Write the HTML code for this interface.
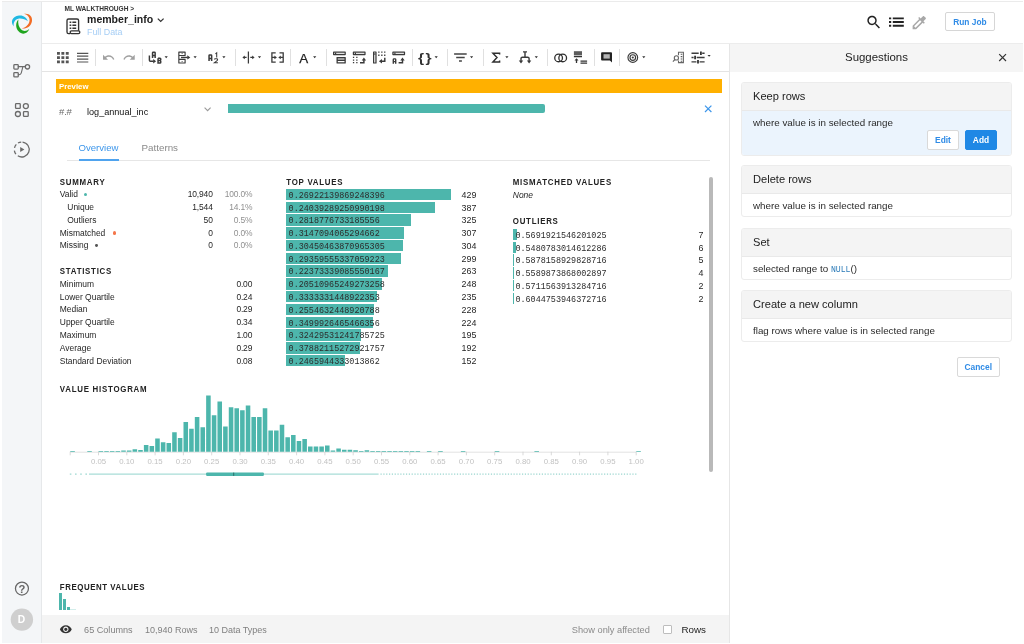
<!DOCTYPE html>
<html>
<head>
<meta charset="utf-8">
<title>member_info</title>
<style>
*{box-sizing:border-box;margin:0;padding:0}
html,body{width:1024px;height:644px;overflow:hidden;background:#fff}
body{font-family:"Liberation Sans",sans-serif;color:#222;position:relative;font-size:9px}
#root{position:absolute;left:0;top:0;width:1024px;height:644px;will-change:transform;background:transparent}
.abs{position:absolute;white-space:nowrap}
.t{position:absolute;white-space:nowrap;line-height:12px;height:12px}
.r{text-align:right}
#side{left:0;top:2px;width:42px;height:642px;background:#f4f6f8;border-right:1px solid #e6e8ea}
#hdr{left:0;top:0;width:1024px;height:44px;border-top:2.1px solid #ebebeb;border-bottom:1px solid #ececec;background:#fff}
#tb{left:42px;top:44px;width:688px;height:28px;border-bottom:1px solid #e4e4e4;background:#fff}
.sep{position:absolute;top:49px;width:1px;height:17px;background:#e0e0e0}
.dd{position:absolute;top:56.3px;width:0;height:0;border-left:1.7px solid transparent;border-right:1.7px solid transparent;border-top:2px solid #333}
#panel{left:729px;top:44px;width:295px;height:600px;border-left:1px solid #e6e6e6;background:#fff}
#phead{left:730px;top:44px;width:294px;height:28px;background:#f5f5f5}
.card{position:absolute;left:741px;width:271px;border:1px solid #ececec;border-radius:3px;background:#fff;overflow:hidden}
.card .h{height:28px;background:#f4f4f4;border-bottom:1px solid #e9e9e9;font-size:11.1px;line-height:27.5px;padding-left:11px;color:#222}
.card .b{font-size:9.8px;line-height:12px;padding:5.6px 0 0 11px;color:#2a2a2a;height:23px}
.btn{position:absolute;height:20px;border-radius:2px;font-size:8.4px;font-weight:bold;text-align:center;line-height:18.5px;border:1px solid #d9d9d9;background:#fff;color:#2f8be6}
.sum{font-size:8.45px;color:#262626}
.gray{color:#909090}
.num{letter-spacing:-0.15px}
.cnt{font-size:8.9px}
.sec{font-size:7.9px;font-weight:bold;letter-spacing:0.74px;color:#222;transform:scaleY(1.1);transform-origin:0 50%}
.mono{font-family:"Liberation Mono",monospace;font-size:8.45px;color:#2c2c2c;transform:scaleY(1.12);transform-origin:0 50%}
.dot{position:absolute;width:3.4px;height:3.4px;border-radius:50%}
.bar{position:absolute;background:#4db6ac}
.ic{position:absolute;overflow:visible}
</style>
</head>
<body>
<div id="root">
<div id="hdr" class="abs"></div>
<div id="side" class="abs"></div>
<div class="t " style="left:64.5px;top:3.20px;font-size:6.6px;font-weight:bold;color:#333">ML WALKTHROUGH &gt;</div>
<div class="t " style="left:87px;top:13.40px;font-size:10.55px;font-weight:bold;color:#222">member_info</div>
<div class="t " style="left:87px;top:25.90px;font-size:8.9px;color:#a6cef5">Full Data</div>
<div id="tb" class="abs"></div>
<div class="abs" style="left:42px;top:615px;width:687px;height:29px;background:#f4f4f4"></div>
<div id="panel" class="abs"></div>
<div id="phead" class="abs"></div>
<svg class="ic" style="left:0px;top:0px" width="42" height="644" viewBox="0 0 42 644">
<path d="M13.8 26.5C10.1 22.4 12 16.4 19 15.6C23.4 15.1 26.8 17.7 27.8 21.2C25 18.8 21 18.1 18.2 18.7C14.6 19.6 13.1 22.9 13.8 26.5Z" fill="#1fb8e2"/>
<path d="M24 13.8C29 12.8 32.9 16.4 31.9 21.4C31 26.2 26.5 29.2 21.6 28.4C25.8 27.5 28.7 24.7 29.5 20.9C30.1 17.6 27.7 14.9 24 13.8Z" fill="#f26c24"/>
<path d="M18.4 19.4C15.4 22.4 15.4 28.2 18.8 31.6C22 34.9 27.2 34.4 29.4 28.8C26.6 31.6 23.3 31.7 21 29.3C18.7 26.8 17.7 23.2 18.4 19.4Z" fill="#1fa51f"/>
<g fill="none" stroke="#6b6b6b" stroke-width="1.3" stroke-linejoin="round" stroke-linecap="round">
<rect x="13.85" y="64.65" width="4.4" height="4.4" rx="0.8"/>
<rect x="13.85" y="72.55" width="4.4" height="4.4" rx="0.8"/>
<circle cx="27.45" cy="66.85" r="2.15"/>
<path d="M18.3 66.6H25.2M22.9 66.7L21.3 72.9Q20.9 74.6 19.2 74.7H18.4" stroke-width="1.1"/>
<rect x="15.55" y="103.7" width="4.7" height="4.7" rx="0.7"/>
<circle cx="25.85" cy="106.05" r="2.5"/>
<circle cx="17.9" cy="114" r="2.5"/>
<rect x="23.5" y="111.65" width="4.7" height="4.7" rx="0.7"/>
<path d="M22.53 142.09A7.45 7.45 0 1 1 17.80 155.82M15.88 154.09A7.45 7.45 0 0 1 14.37 150.54M14.49 147.82A7.45 7.45 0 0 1 16.30 144.42M18.02 143.05A7.45 7.45 0 0 1 21.23 142.07" stroke-width="1.3" stroke-linecap="butt"/>
</g>
<path d="M20.2 147.1L24.4 149.5L20.2 151.9Z" fill="#6b6b6b"/>
<circle cx="21.95" cy="588.55" r="6.5" fill="none" stroke="#666" stroke-width="1.25"/>
<text x="21.95" y="592.6" font-family="Liberation Sans, sans-serif" font-size="11.2" font-weight="bold" fill="#666" text-anchor="middle">?</text>
<circle cx="21.9" cy="619.6" r="11.2" fill="#cfcfcf"/>
<text x="21.5" y="623.3" font-family="Liberation Sans, sans-serif" font-size="10.3" font-weight="bold" fill="#fff" text-anchor="middle">D</text>
</svg>
<svg class="ic" style="left:42px;top:0px" width="982" height="44" viewBox="42 0 982 44">
<g fill="none" stroke="#333" stroke-width="1.35" stroke-linejoin="round">
<path d="M70.2 33.6H68.6Q67 33.6 67 32V20.6Q67 19 68.6 19H77Q78.6 19 78.6 20.6V30.8"/>
<rect x="70.2" y="30.8" width="9.6" height="2.8" rx="1.3"/>
</g>
<path d="M69.6 21.6h1.7v1.5h-1.7zM72.4 21.6h3.8v1.5h-3.8zM69.6 24.5h1.7v1.5h-1.7zM72.4 24.5h3.8v1.5h-3.8zM69.6 27.4h1.7v1.5h-1.7zM72.4 27.4h3.8v1.5h-3.8z" fill="#333"/>
<path d="M157.8 18.6L160.7 21.4L163.6 18.6" fill="none" stroke="#333" stroke-width="1.3"/>
<path transform="translate(865.2,13.7) scale(0.72)" d="M15.5 14h-.79l-.28-.27C15.41 12.59 16 11.11 16 9.5 16 5.91 13.09 3 9.5 3S3 5.91 3 9.5 5.91 16 9.5 16c1.61 0 3.09-.59 4.23-1.57l.27.28v.79l5 4.99L20.49 19l-4.99-5zm-6 0C7.01 14 5 11.99 5 9.5S7.01 5 9.5 5 14 7.01 14 9.5 11.99 14 9.5 14z" fill="#222"/>
<path d="M889 17.45h2.2v1.8h-2.2zM892.8 17.45h11v1.8h-11zM889 21.1h2.2v1.8h-2.2zM892.8 21.1h11v1.8h-11zM889 24.85h2.2v1.8h-2.2zM892.8 24.85h11v1.8h-11z" fill="#222"/>
<path transform="translate(910.4,13.7) scale(0.74)" d="M20.71 5.63l-2.34-2.34c-.39-.39-1.02-.39-1.41 0l-3.12 3.12-1.93-1.91-1.41 1.41 1.42 1.42L3 16.25V21h4.75l8.92-8.92 1.42 1.42 1.41-1.41-1.92-1.92 3.12-3.12c.4-.4.4-1.03.01-1.42zM6.92 19L5 17.08l8.06-8.06 1.92 1.92L6.92 19z" fill="#a8a8a8"/>
</svg>
<div class="btn" style="left:945.1px;top:12.3px;width:49.6px;height:19.2px;line-height:19.4px;font-size:8.35px;border-color:#d6d6d6">Run Job</div>
<svg class="ic" style="left:42px;top:44px" width="688" height="28" viewBox="42 44 688 28">
<path d="M57 52h2.9v2.8h-2.9zM57 56.2h2.9v2.8h-2.9zM57 60.4h2.9v2.8h-2.9zM61.4 52h2.9v2.8h-2.9zM61.4 56.2h2.9v2.8h-2.9zM61.4 60.4h2.9v2.8h-2.9zM65.8 52h2.9v2.8h-2.9zM65.8 56.2h2.9v2.8h-2.9zM65.8 60.4h2.9v2.8h-2.9z" fill="#555"/>
<path d="M77 53.3H88.3M77 56.2H88.3M77 59.1H88.3M77 62H88.3" stroke="#555" stroke-width="1.2" fill="none"/>
<path transform="translate(101.9,50.9) scale(0.556)" d="M12.5 8c-2.65 0-5.05.99-6.9 2.6L2 7v9h9l-3.62-3.62c1.39-1.16 3.16-1.88 5.12-1.88 3.54 0 6.55 2.31 7.6 5.5l2.37-.78C21.08 11.03 17.15 8 12.5 8z" fill="#a0a0a0"/>
<path transform="translate(122.5,50.9) scale(0.556)" d="M18.4 10.6C16.55 8.99 14.15 8 11.5 8c-4.65 0-8.58 3.03-9.96 7.22L3.9 16c1.05-3.19 4.05-5.5 7.6-5.5 1.95 0 3.73.72 5.12 1.88L13 16h9V7l-3.6 3.6z" fill="#a0a0a0"/>
<g fill="none" stroke="#3a3a3a" stroke-width="1.45">
<path d="M149.4 55.4V60.2Q149.4 61.2 150.4 61.2H153.6"/>
</g>
<path d="M153.2 59L156.1 61.2L153.2 63.4Z" fill="#3a3a3a"/>
<path d="M152.55 57.9V52.800000000000004Q152.55 52.35 153.20000000000002 52.35H154.5Q155.15 52.35 155.15 52.800000000000004V57.9M152.55 55.506H155.15" fill="none" stroke="#3a3a3a" stroke-width="1.5"/>
<path d="M158.05 58.15H160.0Q160.75 58.15 160.75 58.9V59.55Q160.75 60.55 159.9 60.55H158.05M159.9 60.55Q160.75 60.55 160.75 61.55V62.199999999999996Q160.75 62.949999999999996 160.0 62.949999999999996H158.05V58.15" fill="none" stroke="#3a3a3a" stroke-width="1.5"/>
<path d="M178.85 52.05H185.1V55.5H178.85ZM178.85 59.4H185.1V62.95H178.85ZM178.85 55.5V59.4" fill="none" stroke="#3a3a3a" stroke-width="1.15" stroke-linejoin="round"/>
<path d="M181 57.45H187.8" fill="none" stroke="#3a3a3a" stroke-width="1.4"/>
<path d="M187.3 55.2L190.3 57.4L187.3 59.6Z" fill="#3a3a3a"/>
<path d="M181.4 53.5h1.6v0.6h-1.6zM181.4 60.9h1.6v0.6h-1.6z" fill="#3a3a3a"/>
<path d="M209.05 61.0V55.5Q209.05 55.05 209.70000000000002 55.05H211.0Q211.65 55.05 211.65 55.5V61.0M209.05 58.45399999999999H211.65" fill="none" stroke="#3a3a3a" stroke-width="1.5"/>
<path d="M215.4 53.9L216.7 52.9V57.4" fill="none" stroke="#3a3a3a" stroke-width="1.05"/>
<path d="M214.4 59.6Q214.4 58.7 215.4 58.7H216.6Q217.6 58.7 217.6 59.6Q217.6 60.4 216.8 60.9L214.4 62.7H217.9" fill="none" stroke="#3a3a3a" stroke-width="1.05"/>
<path d="M248.4 51.4V63.6M243.6 57.4H246.6M250.3 57.4H253.4" fill="none" stroke="#3a3a3a" stroke-width="1.25"/>
<path d="M244.8 55.5L242.4 57.4L244.8 59.3ZM252.2 55.5L254.6 57.4L252.2 59.3Z" fill="#3a3a3a"/>
<path d="M275.7 52.8H271.9V62.1H275.7M279.5 52.8H283.2V62.1H279.5M272 57.4H275M283.2 57.4H280.4" fill="none" stroke="#3a3a3a" stroke-width="1.3"/>
<path d="M274.4 55.5L276.9 57.4L274.4 59.3ZM280.8 55.5L278.3 57.4L280.8 59.3Z" fill="#3a3a3a"/>
<text x="299.3" y="62.5" font-family="Liberation Sans, sans-serif" font-size="13.4" fill="#222" stroke="#222" stroke-width="0.25">A</text>
<rect x="333" y="51.4" width="12.8" height="3.8" rx="0.7" fill="#3a3a3a"/><rect x="334.2" y="52.75" width="10.4" height="1.1" fill="#fff"/><rect x="335.0" y="52.6" width="1.2" height="1.4" fill="#3a3a3a"/>
<rect x="336.5" y="57" width="9.3" height="6.6" rx="0.6" fill="#3a3a3a"/><path d="M337.8 58.4h6.7v1.1h-6.7zM337.8 61.1h6.7v1.1h-6.7z" fill="#fff"/>
<rect x="352.8" y="51.4" width="12.8" height="3.8" rx="0.7" fill="#3a3a3a"/><rect x="354.0" y="52.75" width="10.4" height="1.1" fill="#fff"/><rect x="354.8" y="52.6" width="1.2" height="1.4" fill="#3a3a3a"/>
<path d="M352.9 56.8h1.3v1.3h-1.3zM352.9 59.4h1.3v1.3h-1.3zM352.9 62.0h1.3v1.3h-1.3zM356.2 56.8h1.3v1.3h-1.3zM356.2 59.4h1.3v1.3h-1.3zM356.2 62.0h1.3v1.3h-1.3z" fill="#3a3a3a"/>
<path d="M360 62.7H363.9V59.6" fill="none" stroke="#3a3a3a" stroke-width="1.45"/><path d="M361.7 60.4L363.9 57.4L366.1 60.4Z" fill="#3a3a3a"/>
<rect x="373" y="51.4" width="3.6" height="12.2" rx="0.6" fill="#3a3a3a"/><rect x="374.25" y="52.5" width="1.1" height="10" fill="#fff"/>
<rect x="374.1" y="53.4" width="1.4" height="1.3" fill="#3a3a3a"/>
<path d="M378.2 51.5h1.3v1.3h-1.3zM378.2 54.6h1.3v1.3h-1.3zM381.2 51.5h1.3v1.3h-1.3zM381.2 54.6h1.3v1.3h-1.3zM384.1 51.5h1.3v1.3h-1.3zM384.1 54.6h1.3v1.3h-1.3z" fill="#3a3a3a"/>
<path d="M384.8 57.8V61.3H381.4" fill="none" stroke="#3a3a3a" stroke-width="1.45"/>
<path d="M382 59.1L378.9 61.3L382 63.5Z" fill="#3a3a3a"/>
<rect x="392.3" y="51.4" width="12.8" height="3.8" rx="0.7" fill="#3a3a3a"/><rect x="393.5" y="52.75" width="10.4" height="1.1" fill="#fff"/><rect x="394.3" y="52.6" width="1.2" height="1.4" fill="#3a3a3a"/>
<path d="M393.3 63.7V59.400000000000006Q393.3 58.900000000000006 394.0 58.900000000000006H395.00000000000006Q395.70000000000005 58.900000000000006 395.70000000000005 59.400000000000006V63.7M393.3 61.61H395.70000000000005" fill="none" stroke="#3a3a3a" stroke-width="1.4"/>
<path d="M398.6 62.7H402.5V59.6" fill="none" stroke="#3a3a3a" stroke-width="1.45"/><path d="M400.3 60.4L402.5 57.4L404.70000000000005 60.4Z" fill="#3a3a3a"/>
<g font-family="Liberation Sans, sans-serif" font-size="13.2" font-weight="bold" fill="#333"><text transform="translate(418.1,61.5) scale(1.18,1)">{</text><text transform="translate(425.4,61.5) scale(1.18,1)">}</text></g>
<path d="M454.1 53.9H466.7M456.2 57.5H464.7M459 61.1H461.9" stroke="#444" stroke-width="1.5" fill="none"/>
<path d="M499.6 54.6V53.2H492.9L497 57.5L492.9 61.9H499.6V60.4" fill="none" stroke="#2e2e2e" stroke-width="1.45" stroke-linejoin="miter"/>
<path d="M523 51.9H527M525 51.9V57.2M521 61.6V58.6Q521 57.2 522.4 57.2H527.7Q529.1 57.2 529.1 58.6V61.6" fill="none" stroke="#3a3a3a" stroke-width="1.4"/>
<path d="M518.8 60.6L521 63.6L523.2 60.6ZM526.9 60.6L529.1 63.6L531.3 60.6Z" fill="#3a3a3a"/>
<circle cx="558.6" cy="57.9" r="3.85" fill="none" stroke="#2e2e2e" stroke-width="1.3"/><circle cx="562.7" cy="57.9" r="3.85" fill="none" stroke="#2e2e2e" stroke-width="1.3"/>
<rect x="573.9" y="51.2" width="8.1" height="3.9" fill="#5c5c5c"/>
<path d="M573.9 56.5H582M580.5 61.1H587.1M580.5 63.1H587.1" stroke="#333" stroke-width="1.35" fill="none"/>
<path d="M576.5 63V59.5" stroke="#333" stroke-width="1.3" fill="none"/><path d="M574.5 60.6L576.5 58.2L578.5 60.6Z" fill="#333"/>
<path d="M602 52.3H611.1Q612 52.3 612 53.2V62.6L609.9 60.5H602Q601.1 60.5 601.1 59.6V53.2Q601.1 52.3 602 52.3Z" fill="#222"/>
<rect x="603.5" y="54.2" width="6.3" height="4.4" fill="#b5b5b5"/>
<circle cx="632.8" cy="57.5" r="4.85" fill="none" stroke="#3a3a3a" stroke-width="1.15"/><circle cx="632.8" cy="57.5" r="2.8" fill="none" stroke="#3a3a3a" stroke-width="1.15"/><circle cx="632.8" cy="57.5" r="1.1" fill="#3a3a3a"/>
<g fill="none" stroke="#666" stroke-width="1.1">
<path d="M678.5 55.3V52.3H683.4V62.6H678.5V60.6"/>
<circle cx="676.4" cy="57.9" r="2.1"/>
<path d="M674.9 59.5L672.9 61.6"/>
<path d="M680.7 54.2H682.3M680.7 56.6H682.3M680.7 59H682.3M680.7 61.2H682.3" stroke-width="1.1" stroke="#555"/>
</g>
<path d="M691.5 53.2H698.7M702.2 53.2H704.6M691.5 57.5H693.6M696.7 57.5H704.6M691.5 61.8H696.4M699.6 61.8H704.6" stroke="#3c3c3c" stroke-width="1.35" fill="none"/>
<path d="M700 51.4h1.8v3.6h-1.8zM694.2 55.7h1.8v3.6h-1.8zM697.1 60h1.8v3.6h-1.8z" fill="#333"/>
</svg>
<div class="sep" style="left:95.3px"></div>
<div class="sep" style="left:141.6px"></div>
<div class="sep" style="left:235px"></div>
<div class="sep" style="left:290.2px"></div>
<div class="sep" style="left:326px"></div>
<div class="sep" style="left:411.6px"></div>
<div class="sep" style="left:447px"></div>
<div class="sep" style="left:482.6px"></div>
<div class="sep" style="left:547.1px"></div>
<div class="sep" style="left:593.5px"></div>
<div class="sep" style="left:619px"></div>
<svg class="ic" style="left:42px;top:50px" width="688" height="12" viewBox="42 50 688 12">
<path d="M164.60 56.3h3.2l-1.6 1.9zM193.50 56.3h3.2l-1.6 1.9zM222.30 56.3h3.2l-1.6 1.9zM257.90 56.3h3.2l-1.6 1.9zM313.10 56.3h3.2l-1.6 1.9zM434.60 56.3h3.2l-1.6 1.9zM470.00 56.3h3.2l-1.6 1.9zM505.30 56.3h3.2l-1.6 1.9zM534.70 56.3h3.2l-1.6 1.9zM642.20 56.3h3.2l-1.6 1.9zM707.50 54.9h3.2l-1.6 1.9z" fill="#333"/>
</svg>
<svg class="ic" style="left:42px;top:96px" width="688" height="30" viewBox="42 96 688 30">
<path d="M204.6 107.6L207.6 110.7L210.6 107.6" fill="none" stroke="#9a9a9a" stroke-width="1.1"/>
<path d="M705 105.6L711.4 112M711.4 105.6L705 112" fill="none" stroke="#3d96ea" stroke-width="1.2"/>
</svg>
<svg class="ic" style="left:990px;top:48px" width="24" height="20" viewBox="990 48 24 20">
<path d="M999.2 54.2L1006 61M1006 54.2L999.2 61" fill="none" stroke="#333" stroke-width="1.2"/>
</svg>
<svg class="ic" style="left:56px;top:620px" width="20" height="18" viewBox="56 620 20 18">
<path transform="translate(59.35,622.8) scale(0.54)" d="M12 4.5C7 4.5 2.73 7.61 1 12c1.73 4.39 6 7.5 11 7.5s9.27-3.11 11-7.5c-1.73-4.39-6-7.5-11-7.5zM12 17c-2.76 0-5-2.24-5-5s2.24-5 5-5 5 2.24 5 5-2.24 5-5 5zm0-8c-1.66 0-3 1.34-3 3s1.34 3 3 3 3-1.34 3-3-1.34-3-3-3z" fill="#333"/>
</svg>
<div class="abs" style="left:56px;top:79px;width:666px;height:14px;background:#ffb000"></div>
<div class="t " style="left:59px;top:80.80px;font-size:7.8px;font-weight:bold;color:#fff">Preview</div>
<div class="t " style="left:59px;top:106.20px;font-size:9.6px;color:#6a6a6a;letter-spacing:-0.2px">#.#</div>
<div class="t " style="left:87px;top:106.00px;font-size:9.1px;color:#111">log_annual_inc</div>
<div class="abs" style="left:228px;top:104px;width:317px;height:9px;background:#4db6ac;border-radius:0 2px 2px 0"></div>
<div class="abs" style="left:67px;top:160px;width:643px;height:1px;background:#e6e6e6"></div>
<div class="t " style="left:78.5px;top:142.00px;font-size:9.6px;color:#3d96ea">Overview</div>
<div class="abs" style="left:78.5px;top:159.2px;width:40.5px;height:1.4px;background:#4fa3ee"></div>
<div class="t " style="left:141.5px;top:142.00px;font-size:9.8px;color:#8a8a8a">Patterns</div>
<div class="t sec" style="left:59.8px;top:176.50px;">SUMMARY</div>
<div class="t sum" style="left:59.8px;top:188.30px;">Valid</div>
<div class="dot" style="left:84.15px;top:193.15px;width:3.1px;height:3.1px;background:#4db6ac"></div>
<div class="t r sum num" style="right:811.30px;top:188.30px;">10,940</div>
<div class="t r sum gray num" style="right:771.60px;top:188.30px;">100.0%</div>
<div class="t sum" style="left:67.3px;top:201.08px;">Unique</div>
<div class="t r sum num" style="right:811.30px;top:201.08px;">1,544</div>
<div class="t r sum gray num" style="right:771.60px;top:201.08px;">14.1%</div>
<div class="t sum" style="left:67.3px;top:213.86px;">Outliers</div>
<div class="t r sum num" style="right:811.30px;top:213.86px;">50</div>
<div class="t r sum gray num" style="right:771.60px;top:213.86px;">0.5%</div>
<div class="t sum" style="left:59.8px;top:226.64px;">Mismatched</div>
<div class="dot" style="left:112.50px;top:231.44px;width:3.2px;height:3.2px;background:#f4764a"></div>
<div class="t r sum num" style="right:811.30px;top:226.64px;">0</div>
<div class="t r sum gray num" style="right:771.60px;top:226.64px;">0.0%</div>
<div class="t sum" style="left:59.8px;top:239.42px;">Missing</div>
<div class="dot" style="left:95.40px;top:244.42px;width:2.8px;height:2.8px;background:#555"></div>
<div class="t r sum num" style="right:811.30px;top:239.42px;">0</div>
<div class="t r sum gray num" style="right:771.60px;top:239.42px;">0.0%</div>
<div class="t sec" style="left:59.8px;top:265.70px;">STATISTICS</div>
<div class="t sum" style="left:59.8px;top:277.90px;">Minimum</div>
<div class="t r sum num" style="right:771.80px;top:277.90px;">0.00</div>
<div class="t sum" style="left:59.8px;top:290.68px;">Lower Quartile</div>
<div class="t r sum num" style="right:771.80px;top:290.68px;">0.24</div>
<div class="t sum" style="left:59.8px;top:303.46px;">Median</div>
<div class="t r sum num" style="right:771.80px;top:303.46px;">0.29</div>
<div class="t sum" style="left:59.8px;top:316.24px;">Upper Quartile</div>
<div class="t r sum num" style="right:771.80px;top:316.24px;">0.34</div>
<div class="t sum" style="left:59.8px;top:329.02px;">Maximum</div>
<div class="t r sum num" style="right:771.80px;top:329.02px;">1.00</div>
<div class="t sum" style="left:59.8px;top:341.80px;">Average</div>
<div class="t r sum num" style="right:771.80px;top:341.80px;">0.29</div>
<div class="t sum" style="left:59.8px;top:354.58px;">Standard Deviation</div>
<div class="t r sum num" style="right:771.80px;top:354.58px;">0.08</div>
<div class="t sec" style="left:286.3px;top:176.50px;">TOP VALUES</div>
<div class="bar" style="left:286.3px;top:188.80px;width:165.2px;height:11.4px"></div>
<div class="t mono" style="left:288.6px;top:189.80px;">0.26922139869248396</div>
<div class="t r sum cnt" style="right:547.60px;top:188.80px;">429</div>
<div class="bar" style="left:286.3px;top:201.58px;width:149.0px;height:11.4px"></div>
<div class="t mono" style="left:288.6px;top:202.58px;">0.24039289250990198</div>
<div class="t r sum cnt" style="right:547.60px;top:201.58px;">387</div>
<div class="bar" style="left:286.3px;top:214.36px;width:125.2px;height:11.4px"></div>
<div class="t mono" style="left:288.6px;top:215.36px;">0.2818776733185556</div>
<div class="t r sum cnt" style="right:547.60px;top:214.36px;">325</div>
<div class="bar" style="left:286.3px;top:227.14px;width:118.2px;height:11.4px"></div>
<div class="t mono" style="left:288.6px;top:228.14px;">0.3147094065294662</div>
<div class="t r sum cnt" style="right:547.60px;top:227.14px;">307</div>
<div class="bar" style="left:286.3px;top:239.92px;width:117.1px;height:11.4px"></div>
<div class="t mono" style="left:288.6px;top:240.92px;">0.30450463870965305</div>
<div class="t r sum cnt" style="right:547.60px;top:239.92px;">304</div>
<div class="bar" style="left:286.3px;top:252.70px;width:115.1px;height:11.4px"></div>
<div class="t mono" style="left:288.6px;top:253.70px;">0.29359555337059223</div>
<div class="t r sum cnt" style="right:547.60px;top:252.70px;">299</div>
<div class="bar" style="left:286.3px;top:265.48px;width:101.3px;height:11.4px"></div>
<div class="t mono" style="left:288.6px;top:266.48px;">0.22373339085550167</div>
<div class="t r sum cnt" style="right:547.60px;top:265.48px;">263</div>
<div class="bar" style="left:286.3px;top:278.26px;width:95.5px;height:11.4px"></div>
<div class="t mono" style="left:288.6px;top:279.26px;">0.20510965249273258</div>
<div class="t r sum cnt" style="right:547.60px;top:278.26px;">248</div>
<div class="bar" style="left:286.3px;top:291.04px;width:90.5px;height:11.4px"></div>
<div class="t mono" style="left:288.6px;top:292.04px;">0.3333331448922353</div>
<div class="t r sum cnt" style="right:547.60px;top:291.04px;">235</div>
<div class="bar" style="left:286.3px;top:303.82px;width:87.8px;height:11.4px"></div>
<div class="t mono" style="left:288.6px;top:304.82px;">0.2554632448920788</div>
<div class="t r sum cnt" style="right:547.60px;top:303.82px;">228</div>
<div class="bar" style="left:286.3px;top:316.60px;width:86.3px;height:11.4px"></div>
<div class="t mono" style="left:288.6px;top:317.60px;">0.3499926465466356</div>
<div class="t r sum cnt" style="right:547.60px;top:316.60px;">224</div>
<div class="bar" style="left:286.3px;top:329.38px;width:75.1px;height:11.4px"></div>
<div class="t mono" style="left:288.6px;top:330.38px;">0.32429531241785725</div>
<div class="t r sum cnt" style="right:547.60px;top:329.38px;">195</div>
<div class="bar" style="left:286.3px;top:342.16px;width:73.9px;height:11.4px"></div>
<div class="t mono" style="left:288.6px;top:343.16px;">0.37882115272921757</div>
<div class="t r sum cnt" style="right:547.60px;top:342.16px;">192</div>
<div class="bar" style="left:286.3px;top:354.94px;width:58.5px;height:11.4px"></div>
<div class="t mono" style="left:288.6px;top:355.94px;">0.2465944333013862</div>
<div class="t r sum cnt" style="right:547.60px;top:354.94px;">152</div>
<div class="t sec" style="left:512.8px;top:176.50px;">MISMATCHED VALUES</div>
<div class="t sum" style="left:512.8px;top:189.30px;font-style:italic">None</div>
<div class="t sec" style="left:512.8px;top:216.00px;">OUTLIERS</div>
<div class="bar" style="left:512.8px;top:228.80px;width:4px;height:11.4px"></div>
<div class="t mono" style="left:515.4px;top:229.80px;">0.5691921546201025</div>
<div class="t r sum cnt" style="right:320.70px;top:228.80px;">7</div>
<div class="bar" style="left:512.8px;top:241.58px;width:3.4px;height:11.4px"></div>
<div class="t mono" style="left:515.4px;top:242.58px;">0.5480783014612286</div>
<div class="t r sum cnt" style="right:320.70px;top:241.58px;">6</div>
<div class="bar" style="left:512.8px;top:254.36px;width:1.6px;height:11.4px"></div>
<div class="t mono" style="left:515.4px;top:255.36px;">0.5878158929828716</div>
<div class="t r sum cnt" style="right:320.70px;top:254.36px;">5</div>
<div class="bar" style="left:512.8px;top:267.14px;width:1.4px;height:11.4px"></div>
<div class="t mono" style="left:515.4px;top:268.14px;">0.5589873868002897</div>
<div class="t r sum cnt" style="right:320.70px;top:267.14px;">4</div>
<div class="bar" style="left:512.8px;top:279.92px;width:1.1px;height:11.4px"></div>
<div class="t mono" style="left:515.4px;top:280.92px;">0.5711563913284716</div>
<div class="t r sum cnt" style="right:320.70px;top:279.92px;">2</div>
<div class="bar" style="left:512.8px;top:292.70px;width:1.1px;height:11.4px"></div>
<div class="t mono" style="left:515.4px;top:293.70px;">0.6044753946372716</div>
<div class="t r sum cnt" style="right:320.70px;top:292.70px;">2</div>
<div class="abs" style="left:709px;top:177px;width:4px;height:295px;border-radius:2px;background:#b9b9b9"></div>
<div class="t sec" style="left:59.8px;top:383.60px;">VALUE HISTOGRAM</div>
<svg class="ic" style="left:0;top:380px" width="729" height="110" viewBox="0 380 729 110">
<path d="M70.2 452.2H636.2" stroke="#e3e3e3" stroke-width="1" fill="none"/>
<path d="M70.20 451.7v3.6M98.50 451.7v3.6M126.80 451.7v3.6M155.10 451.7v3.6M183.40 451.7v3.6M211.70 451.7v3.6M240.00 451.7v3.6M268.30 451.7v3.6M296.60 451.7v3.6M324.90 451.7v3.6M353.20 451.7v3.6M381.50 451.7v3.6M409.80 451.7v3.6M438.10 451.7v3.6M466.40 451.7v3.6M494.70 451.7v3.6M523.00 451.7v3.6M551.30 451.7v3.6M579.60 451.7v3.6M607.90 451.7v3.6M636.20 451.7v3.6" stroke="#cfcfcf" stroke-width="0.8" fill="none"/>
<path d="M70.30 451.7v-0.7h4.55v0.7zM87.28 451.7v-0.7h4.55v0.7zM98.60 451.7v-0.7h4.55v0.7zM104.26 451.7v-0.7h4.55v0.7zM109.92 451.7v-0.7h4.55v0.7zM115.58 451.7v-0.7h4.55v0.7zM121.24 451.7v-1.2h4.55v1.2zM126.90 451.7v-1.2h4.55v1.2zM132.56 451.7v-2.5h4.55v2.5zM138.22 451.7v-1.7h4.55v1.7zM143.88 451.7v-6.6h4.55v6.6zM149.54 451.7v-5.8h4.55v5.8zM155.20 451.7v-13.3h4.55v13.3zM160.86 451.7v-9.5h4.55v9.5zM166.52 451.7v-8.8h4.55v8.8zM172.18 451.7v-19.4h4.55v19.4zM177.84 451.7v-13.8h4.55v13.8zM183.50 451.7v-29.6h4.55v29.6zM189.16 451.7v-22.9h4.55v22.9zM194.82 451.7v-34.6h4.55v34.6zM200.48 451.7v-24.4h4.55v24.4zM206.14 451.7v-56.1h4.55v56.1zM211.80 451.7v-36.5h4.55v36.5zM217.46 451.7v-50.2h4.55v50.2zM223.12 451.7v-25.2h4.55v25.2zM228.78 451.7v-44.4h4.55v44.4zM234.44 451.7v-43.5h4.55v43.5zM240.10 451.7v-41.5h4.55v41.5zM245.76 451.7v-46.2h4.55v46.2zM251.42 451.7v-34.6h4.55v34.6zM257.08 451.7v-34.6h4.55v34.6zM262.74 451.7v-43.5h4.55v43.5zM268.40 451.7v-21.1h4.55v21.1zM274.06 451.7v-21.1h4.55v21.1zM279.72 451.7v-26.9h4.55v26.9zM285.38 451.7v-14.5h4.55v14.5zM291.04 451.7v-16.6h4.55v16.6zM296.70 451.7v-10.8h4.55v10.8zM302.36 451.7v-12.8h4.55v12.8zM308.02 451.7v-5.3h4.55v5.3zM313.68 451.7v-5.3h4.55v5.3zM319.34 451.7v-5.3h4.55v5.3zM325.00 451.7v-6.3h4.55v6.3zM330.66 451.7v-1.3h4.55v1.3zM336.32 451.7v-3.3h4.55v3.3zM341.98 451.7v-2.0h4.55v2.0zM347.64 451.7v-2.0h4.55v2.0zM353.30 451.7v-1.5h4.55v1.5zM358.96 451.7v-0.7h4.55v0.7zM364.62 451.7v-1.5h4.55v1.5zM370.28 451.7v-0.7h4.55v0.7zM375.94 451.7v-0.7h4.55v0.7zM381.60 451.7v-0.7h4.55v0.7zM387.26 451.7v-0.7h4.55v0.7zM392.92 451.7v-0.7h4.55v0.7zM398.58 451.7v-0.7h4.55v0.7zM404.24 451.7v-0.7h4.55v0.7zM409.90 451.7v-0.7h4.55v0.7zM415.56 451.7v-0.7h4.55v0.7zM426.88 451.7v-0.7h4.55v0.7zM438.20 451.7v-0.7h4.55v0.7zM460.84 451.7v-0.7h4.55v0.7zM494.80 451.7v-0.7h4.55v0.7zM534.42 451.7v-0.7h4.55v0.7zM636.30 451.7v-0.7h4.55v0.7z" fill="#4db6ac"/>
<g font-family="Liberation Sans, sans-serif" font-size="7.8" fill="#c2c2c2" text-anchor="middle">
<text x="98.50" y="464">0.05</text>
<text x="126.80" y="464">0.10</text>
<text x="155.10" y="464">0.15</text>
<text x="183.40" y="464">0.20</text>
<text x="211.70" y="464">0.25</text>
<text x="240.00" y="464">0.30</text>
<text x="268.30" y="464">0.35</text>
<text x="296.60" y="464">0.40</text>
<text x="324.90" y="464">0.45</text>
<text x="353.20" y="464">0.50</text>
<text x="381.50" y="464">0.55</text>
<text x="409.80" y="464">0.60</text>
<text x="438.10" y="464">0.65</text>
<text x="466.40" y="464">0.70</text>
<text x="494.70" y="464">0.75</text>
<text x="523.00" y="464">0.80</text>
<text x="551.30" y="464">0.85</text>
<text x="579.60" y="464">0.90</text>
<text x="607.90" y="464">0.95</text>
<text x="636.20" y="464">1.00</text>
</g>
<path d="M69.8 474.1H88" stroke="#86cfc7" stroke-width="1" stroke-dasharray="1.6 3.6" fill="none"/>
<path d="M89 474.1H378.6" stroke="#93d4cd" stroke-width="1" fill="none"/>
<path d="M380.5 474.1H636.5" stroke="#7fcac2" stroke-width="1" stroke-dasharray="1.2 1.63" fill="none"/>
<rect x="206.1" y="472.5" width="57.8" height="3.5" rx="1" fill="#4db6ac"/>
<rect x="233.2" y="472.6" width="1" height="3.3" fill="#2b6e68"/>
</svg>
<div class="t sec" style="left:59.8px;top:581.80px;letter-spacing:0.55px">FREQUENT VALUES</div>
<div class="bar" style="left:59.1px;top:593.0px;width:3px;height:16.7px"></div>
<div class="bar" style="left:62.9px;top:599.1px;width:3px;height:10.6px"></div>
<div class="bar" style="left:66.6px;top:606.8px;width:3px;height:2.9px"></div>
<div class="bar" style="left:70.2px;top:609px;width:5.5px;height:0.7px;opacity:.25"></div>
<div class="t " style="left:84.1px;top:623.50px;font-size:9.1px;color:#808080">65 Columns</div>
<div class="t " style="left:145px;top:623.50px;font-size:9px;color:#808080">10,940 Rows</div>
<div class="t " style="left:209px;top:623.50px;font-size:9px;color:#808080">10 Data Types</div>
<div class="t " style="left:571.8px;top:623.60px;font-size:9.25px;color:#8a8a8a">Show only affected</div>
<div class="abs" style="left:663px;top:625px;width:9px;height:9px;border:1px solid #bdbdbd;border-radius:1px;background:#fff"></div>
<div class="t " style="left:681.5px;top:623.60px;font-size:9.8px;color:#222">Rows</div>
<div class="t " style="left:845px;top:51.30px;font-size:11.45px;color:#222">Suggestions</div>
<div class="card" style="top:82px;height:74px"><div class="h">Keep rows</div><div class="b" style="background:#ebf4fd;height:45px">where value is in selected range</div></div>
<div class="btn" style="left:927px;top:130px;width:32px">Edit</div>
<div class="btn" style="left:965px;top:130px;width:32px;background:#1f88e5;border-color:#1f88e5;color:#fff">Add</div>
<div class="card" style="top:165.3px;height:52px"><div class="h">Delete rows</div><div class="b">where value is in selected range</div></div>
<div class="card" style="top:228px;height:52px"><div class="h">Set</div><div class="b">selected range to <span style="font-family:'Liberation Mono',monospace;font-size:8.17px;color:#2a7ab8;display:inline-block;transform:scaleY(1.12)">NULL</span>()</div></div>
<div class="card" style="top:290.3px;height:52px"><div class="h">Create a new column</div><div class="b">flag rows where value is in selected range</div></div>
<div class="btn" style="left:956.5px;top:356.7px;width:43.5px">Cancel</div>
<div class="abs" style="left:0;top:0;width:1024px;height:1.2px;background:#fff"></div>
<div class="abs" style="left:0;top:0;width:1.8px;height:644px;background:#fff"></div>
<div class="abs" style="left:1023px;top:0;width:1px;height:644px;background:#fff"></div>
<div class="abs" style="left:0;top:642.5px;width:1024px;height:1.5px;background:#fff"></div>
</div>
</body>
</html>
